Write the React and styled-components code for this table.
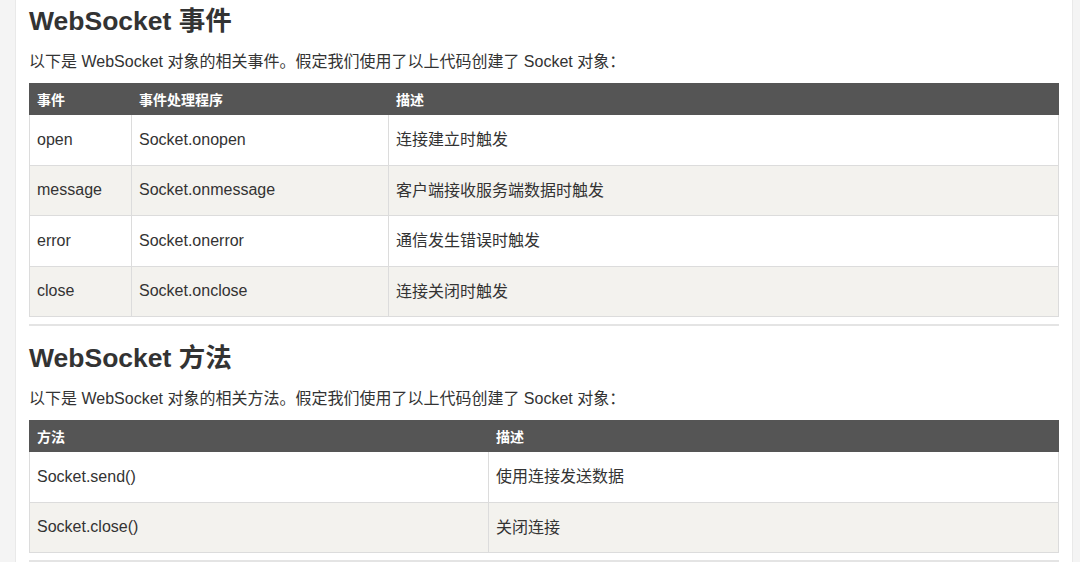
import React from 'react'
import styled, { createGlobalStyle } from 'styled-components'

const GlobalStyle = createGlobalStyle`
    html, body {
        margin: 0;
        padding: 0;
        background: #fff;
        height: 100%;
        overflow: hidden;
    }
    body {
        font-family: "Liberation Sans", "Noto Sans CJK SC", sans-serif;
        color: #333;
    }
`

const Page = styled.div`
    display: flex;
    height: 562px;
`

const Gutter = styled.div`
    flex: 0 0 ${props => props.width}px;
    background: #f4f4f4;
    border-${props => props.side}: 1px solid #e9e9e9;
`

const Main = styled.main`
    flex: 1;
    padding: 5px 13px 0 13px;
    min-width: 0;
`

const Heading = styled.h2`
    margin: 0;
    font-size: 26.5px;
    line-height: 32px;
    font-weight: bold;
    color: #333;
`

const Intro = styled.p`
    margin: 13px 0 9px 0;
    font-size: 16px;
    line-height: 24px;
    color: #333;
`

const Table = styled.table`
    width: 100%;
    border-collapse: collapse;
    table-layout: fixed;
    border: 1px solid #d2d2d2;
`

const HeadCell = styled.th`
    background: #555;
    color: #fff;
    font-size: 14px;
    font-weight: bold;
    text-align: left;
    height: 30px;
    padding: 0 7px;
    border: 1px solid #555;
`

const Row = styled.tr`
    background: #fff;
    &:nth-child(even) {
        background: #f3f2ee;
    }
`

/* CJK glyphs sit lower than the Latin ones, so lift them a little */
const Cell = styled.td`
    height: ${props => (props.$cjk ? '46.5px' : '49.5px')};
    padding: 0 7px ${props => (props.$cjk ? '3px' : '0')} 7px;
    font-size: 16px;
    color: #333;
    border: 1px solid #dcdcdc;
    vertical-align: middle;
`

const Divider = styled.hr`
    margin: 7px 0 16px 0;
    border: 0;
    height: 2px;
    background: #e4e4e4;
`

const events = [
    ['open', 'Socket.onopen', '连接建立时触发'],
    ['message', 'Socket.onmessage', '客户端接收服务端数据时触发'],
    ['error', 'Socket.onerror', '通信发生错误时触发'],
    ['close', 'Socket.onclose', '连接关闭时触发'],
]

const methods = [
    ['Socket.send()', '使用连接发送数据'],
    ['Socket.close()', '关闭连接'],
]

function DataTable({ head, rows, widths }) {
    return (
        <Table>
            <colgroup>
                {widths.map((w, i) => <col key={i} style={w ? { width: w } : undefined} />)}
            </colgroup>
            <thead>
                <tr>
                    {head.map(h => <HeadCell key={h}>{h}</HeadCell>)}
                </tr>
            </thead>
            <tbody>
                {rows.map(r => (
                    <Row key={r[0]}>
                        {r.map((c, i) => (
                            <Cell key={i} $cjk={i === r.length - 1}>{c}</Cell>
                        ))}
                    </Row>
                ))}
            </tbody>
        </Table>
    )
}

export default function App() {
    return (
        <Page>
            <GlobalStyle />
            <Gutter width={15} side="right" />
            <Main>
                <Heading>WebSocket 事件</Heading>
                <Intro>以下是 WebSocket 对象的相关事件。假定我们使用了以上代码创建了 Socket 对象：</Intro>
                <DataTable head={['事件', '事件处理程序', '描述']} rows={events} widths={['102px', '257px', null]} />
                <Divider />

                <Heading>WebSocket 方法</Heading>
                <Intro>以下是 WebSocket 对象的相关方法。假定我们使用了以上代码创建了 Socket 对象：</Intro>
                <DataTable head={['方法', '描述']} rows={methods} widths={['459px', null]} />
                <Divider />
            </Main>
            <Gutter width={7} side="left" />
        </Page>
    )
}
